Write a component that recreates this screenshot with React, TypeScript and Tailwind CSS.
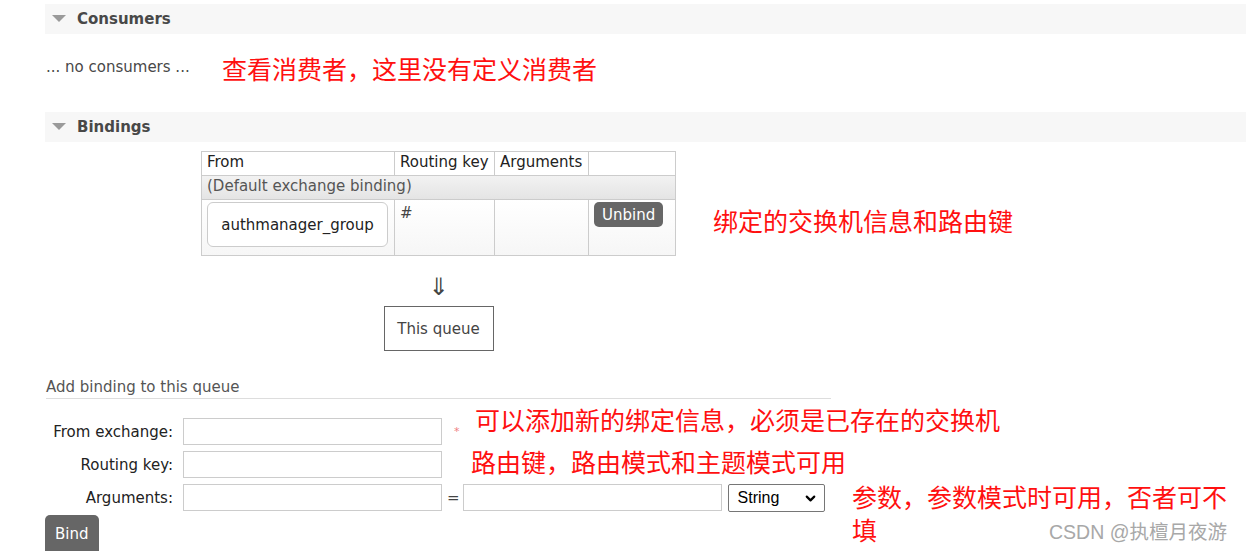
import { ChevronDown } from 'lucide-react'

// RabbitMQ queue page: consumers + bindings section with red annotations

function SectionHeader({ title }: { title: string }) {
  return (
    <div className="h-[30px] bg-[#f7f7f7] flex items-center">
      <svg width="14" height="8" viewBox="0 0 14 8" className="ml-[7px]">
        <polygon points="0,0 14,0 7,7" fill="#9a9a9a" />
      </svg>
      <span className="ml-[11px] text-[15px] font-bold text-[#484848]">{title}</span>
    </div>
  )
}

function Note({ className, children }: { className: string; children: React.ReactNode }) {
  return (
    <div
      className={`absolute text-[25px] leading-[33px] whitespace-nowrap text-[#ff1010] font-['Noto_Sans_CJK_SC',sans-serif] ${className}`}
    >
      {children}
    </div>
  )
}

const cell = 'border border-[#cccccc] px-[5px] text-left font-normal align-top'

export default function App() {
  return (
    <div className="relative w-[1246px] h-[551px] overflow-hidden bg-white text-[15px] leading-[20px] text-[#333] font-['DejaVu_Sans','Liberation_Sans',sans-serif]">
      <div className="pl-[45px] pt-[4px]">
        <SectionHeader title="Consumers" />
        <p className="mt-[23px] ml-[1px] text-[#484848]">... no consumers ...</p>

        <div className="mt-[35px]">
          <SectionHeader title="Bindings" />
        </div>

        <div className="ml-[156px] mt-[9px] w-[475px]">
          <table className="border-collapse w-full text-[15px] leading-[20px] text-[#222]">
            <thead>
              <tr className="h-[24px]">
                <th className={`${cell} w-[193px] align-middle`}>From</th>
                <th className={`${cell} w-[100px] align-middle whitespace-nowrap`}>Routing key</th>
                <th className={`${cell} w-[94px] align-middle`}>Arguments</th>
                <th className={cell}></th>
              </tr>
            </thead>
            <tbody>
              <tr className="h-[24px] bg-gradient-to-b from-[#f2f2f2] to-[#e4e4e4]">
                <td colSpan={4} className={`${cell} align-middle text-[#555]`}>
                  (Default exchange binding)
                </td>
              </tr>
              <tr className="h-[56px] bg-gradient-to-b from-white to-[#f6f6f6]">
                <td className={`${cell} px-[5px] py-[2px]`}>
                  <div className="h-[45px] w-[181px] flex items-center justify-center border border-[#cccccc] rounded-[6px] bg-white text-[#222]">
                    authmanager_group
                  </div>
                </td>
                <td className={`${cell} pt-[3px] text-[#444]`}>#</td>
                <td className={cell}></td>
                <td className={`${cell} pt-[2px]`}>
                  <button className="h-[25px] px-[8px] bg-[#666] text-white rounded-[5px] text-[15px]">
                    Unbind
                  </button>
                </td>
              </tr>
            </tbody>
          </table>

          <div className="w-[475px] flex flex-col items-center">
            <div className="mt-[18px] text-[24px] leading-[26px] text-[#444]">⇓</div>
            <div className="mt-[6px] w-[110px] h-[45px] border border-[#666] flex items-center justify-center text-[#444]">
              This queue
            </div>
          </div>
        </div>

        <div className="mt-[26px] w-[785px] border-b border-[#dddddd] pb-[1px] ml-[1px] text-[#555]">
          Add binding to this queue
        </div>

        <div className="mt-[19px] flex flex-col gap-[6px]">
          <div className="flex items-center">
            <label className="w-[128px] text-right text-[#222]">From exchange:</label>
            <input className="ml-[10px] w-[259px] h-[27px] border border-[#cccccc] outline-none" />
            <span className="ml-[12px] text-[#f08080] text-[11px]">*</span>
          </div>
          <div className="flex items-center">
            <label className="w-[128px] text-right text-[#222]">Routing key:</label>
            <input className="ml-[10px] w-[259px] h-[27px] border border-[#cccccc] outline-none" />
          </div>
          <div className="flex items-start">
            <label className="w-[128px] text-right text-[#222] pt-[4px]">Arguments:</label>
            <input className="ml-[10px] w-[259px] h-[27px] border border-[#cccccc] outline-none" />
            <span className="ml-[5px] pt-[4px] text-[#444]">=</span>
            <input className="ml-[3px] w-[259px] h-[27px] border border-[#cccccc] outline-none" />
            <div className="ml-[6px] w-[97px] h-[28px] border border-[#767676] rounded-[2px] flex items-center justify-between pl-[9px] pr-[6px] font-['Liberation_Sans',sans-serif] text-[16px] text-black">
              String
              <ChevronDown className="w-[15px] h-[15px]" strokeWidth={3.5} />
            </div>
          </div>
        </div>

        <button className="mt-[3px] h-[40px] px-[10px] bg-[#666] text-white text-[15px] rounded-t-[5px] pb-[3px]">
          Bind
        </button>
      </div>

      <Note className="left-[222px] top-[52px]">查看消费者，这里没有定义消费者</Note>
      <Note className="left-[713px] top-[204px]">绑定的交换机信息和路由键</Note>
      <Note className="left-[475px] top-[403px]">可以添加新的绑定信息，必须是已存在的交换机</Note>
      <Note className="left-[471px] top-[445px]">路由键，路由模式和主题模式可用</Note>
      <Note className="left-[852px] top-[480px]">
        <div>参数，参数模式时可用，否者可不</div>
        <div className="w-fit">填</div>
      </Note>
      <div className="absolute left-[1049px] top-[519px] text-[19.5px] leading-[26px] text-[#a8a8a8] font-['Liberation_Sans','Noto_Sans_CJK_SC',sans-serif]">
        CSDN @执檀月夜游
      </div>
    </div>
  )
}
